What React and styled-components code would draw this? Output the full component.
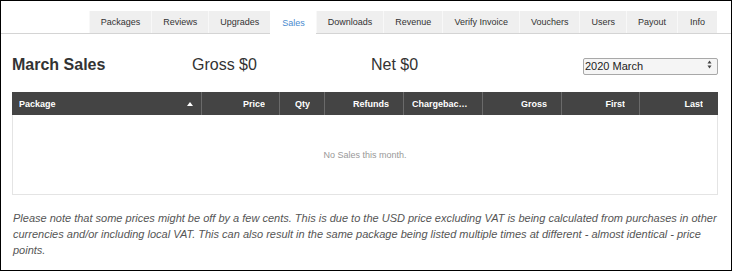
import React from "react";
import styled, { createGlobalStyle } from "styled-components";

const GlobalStyle = createGlobalStyle`
  html, body {
    margin: 0;
    padding: 0;
    background: #fff;
  }
  body {
    font-family: "Liberation Sans", Arial, sans-serif;
    color: #333;
  }
`;

const Frame = styled.div`
  width: 732px;
  height: 271px;
  box-sizing: border-box;
  border: 1px solid #000;
  background: #fff;
  overflow: hidden;
`;

const TabBar = styled.div`
  display: flex;
  justify-content: flex-end;
  align-items: flex-end;
  height: 23px;
  padding: 9px 14px 0;
  border-bottom: 1px solid #d4d4d4;
`;

const Tab = styled.div`
  height: ${(p) => (p.$active ? "23px" : "22px")};
  line-height: ${(p) => (p.$active ? "24px" : "22px")};
  padding: 0 ${(p) => p.$pad || 11}px;
  font-size: 9px;
  color: ${(p) => (p.$active ? "#4a8bd0" : "#333")};
  background: ${(p) => (p.$active ? "#fff" : "#efefef")};
  border-left: 1px solid ${(p) => (p.$active ? "#fff" : "#f8f8f8")};
  margin-bottom: ${(p) => (p.$active ? "-1px" : "0")};
  white-space: nowrap;
`;

const Content = styled.div`
  padding: 0 13px 0 11px;
`;

const Summary = styled.div`
  display: grid;
  grid-template-columns: 180px 179px 1fr auto;
  align-items: center;
  height: 20px;
  margin-top: 21px;
`;

const Title = styled.h1`
  margin: 0;
  font-size: 16px;
  font-weight: bold;
  color: #333;
`;

const Total = styled.div`
  font-size: 16px;
  color: #333;
`;

const SelectWrap = styled.div`
  position: relative;
  width: 135px;
  height: 17px;
  margin-top: -1px;
`;

const Select = styled.select`
  appearance: none;
  -webkit-appearance: none;
  width: 100%;
  height: 100%;
  box-sizing: border-box;
  border: 1px solid #a8a8a8;
  border-radius: 2px;
  background: #f5f5f5;
  font-family: "Liberation Sans", Arial, sans-serif;
  font-size: 11px;
  color: #222;
  padding: 0 0 0 1px;
  outline: none;
`;

const SelectArrows = styled.svg`
  position: absolute;
  right: 6px;
  top: 4px;
  pointer-events: none;
`;

const Table = styled.div`
  margin-top: 17px;
`;

const HeadRow = styled.div`
  display: grid;
  grid-template-columns: 189px 78px 45px 79px 79px 79px 78px 78px;
  height: 23px;
  background: #444;
`;

const HeadCell = styled.div`
  display: flex;
  align-items: center;
  justify-content: ${(p) => (p.$left ? "space-between" : "flex-end")};
  padding: ${(p) => (p.$left ? "0 8px 0 7px" : "0 14px 0 8px")};
  border-left: ${(p) => (p.$first ? "none" : "1px solid #6a6a6a")};
  font-size: 9px;
  font-weight: bold;
  color: #fff;
  min-width: 0;
`;

const HeadText = styled.span`
  overflow: hidden;
  text-overflow: ellipsis;
  white-space: nowrap;
`;

const Body = styled.div`
  height: 79px;
  border: 1px solid #e4e4e4;
  border-top: none;
  display: flex;
  align-items: center;
  justify-content: center;
  font-size: 9px;
  color: #999;
`;

const Note = styled.p`
  margin: 15px 0 0 1px;
  font-size: 11px;
  line-height: 16px;
  font-style: italic;
  color: #555;
`;

const tabs = [
  "Packages",
  "Reviews",
  "Upgrades",
  "Sales",
  "Downloads",
  "Revenue",
  "Verify Invoice",
  "Vouchers",
  "Users",
  "Payout",
  "Info",
];

const columns = [
  "Package",
  "Price",
  "Qty",
  "Refunds",
  "Chargebacks",
  "Gross",
  "First",
  "Last",
];

class App extends React.Component {
  state = {
    mes: "2020-03",
  };

  onChangeMes = (event) => {
    this.setState({ mes: event.target.value });
  };

  render() {
    return (
      <Frame>
        <GlobalStyle />
        <TabBar>
          {tabs.map((nome) => (
            <Tab key={nome} $active={nome === "Sales"} $pad={nome === "Info" ? 12 : 11}>
              {nome}
            </Tab>
          ))}
        </TabBar>
        <Content>
          <Summary>
            <Title>March Sales</Title>
            <Total>Gross $0</Total>
            <Total>Net $0</Total>
            <SelectWrap>
              <Select value={this.state.mes} onChange={this.onChangeMes}>
                <option value="2020-03">2020 March</option>
                <option value="2020-02">2020 February</option>
                <option value="2020-01">2020 January</option>
              </Select>
              <SelectArrows width="5" height="9" viewBox="0 0 5 9">
                <path d="M2.5 0.5 L4.5 3.5 L0.5 3.5 Z" fill="#444" />
                <path d="M2.5 8.5 L4.5 5.5 L0.5 5.5 Z" fill="#444" />
              </SelectArrows>
            </SelectWrap>
          </Summary>

          <Table>
            <HeadRow>
              {columns.map((col, i) => (
                <HeadCell key={col} $left={i === 0} $first={i === 0}>
                  <HeadText>{col}</HeadText>
                  {i === 0 && (
                    <svg width="6" height="4" viewBox="0 0 6 4">
                      <path d="M3 0 L6 4 L0 4 Z" fill="#fff" />
                    </svg>
                  )}
                </HeadCell>
              ))}
            </HeadRow>
            <Body>No Sales this month.</Body>
          </Table>

          <Note>
            Please note that some prices might be off by a few cents. This is
            due to the USD price excluding VAT is being calculated from
            purchases in other currencies and/or including local VAT. This can
            also result in the same package being listed multiple times at
            different - almost identical - price points.
          </Note>
        </Content>
      </Frame>
    );
  }
}

export default App;
